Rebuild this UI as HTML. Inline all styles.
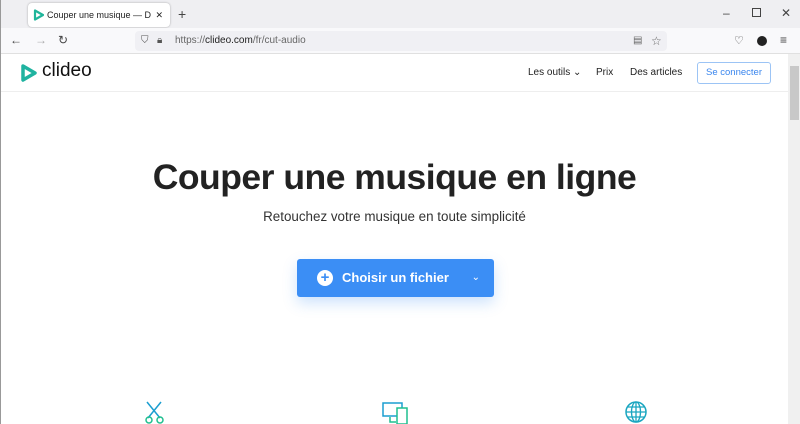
<!DOCTYPE html>
<html><head><meta charset="utf-8"><style>
*{margin:0;padding:0;box-sizing:border-box}
body{width:800px;height:424px;overflow:hidden;background:#fff;font-family:"Liberation Sans",sans-serif;position:relative;border-left:1px solid #999;border-right:1px solid #999}
.tabbar{position:absolute;left:0;top:0;width:800px;height:28px;background:#efeff2}
.tab{position:absolute;left:27px;top:3px;width:142px;height:24px;background:#fff;border-radius:4px;box-shadow:0 0 2px rgba(0,0,0,.3);font-size:9px;color:#222;line-height:24px}
.tabt{position:absolute;left:19px;top:0;width:104px;white-space:nowrap;overflow:hidden}
.toolbar{position:absolute;left:0;top:28px;width:800px;height:26px;background:#f9f9fb;border-bottom:1px solid #e0e0e0}
.url{position:absolute;left:134px;top:3px;width:532px;height:20px;background:#f0f0f4;border-radius:4px;font-size:10px;color:#666;line-height:20px;padding-left:40px}
.ic{position:absolute;font-size:12px;color:#444}
.header{position:absolute;left:0;top:54px;width:787px;height:38px;border-bottom:1px solid #eee}
.nav{position:absolute;top:13px;font-size:10px;color:#222}
.btn2{position:absolute;left:696px;top:8px;width:74px;height:22px;border:1px solid #9cc4f5;border-radius:3px;color:#3a86ee;font-size:9.5px;text-align:center;line-height:20px}
.scroll{position:absolute;left:787px;top:54px;width:13px;height:370px;background:#f0f0f0}
.thumb{position:absolute;left:789px;top:66px;width:9px;height:54px;background:#c8c8c8}
h1{position:absolute;left:0;width:787px;top:157px;text-align:center;font-size:35.5px;font-weight:bold;color:#222;letter-spacing:-0.5px}
.sub{position:absolute;left:0;width:787px;top:209px;text-align:center;font-size:13.4px;color:#333}
.main{position:absolute;left:296px;top:259px;width:197px;height:38px;background:#3b8ef5;border-radius:3px;box-shadow:0 6px 14px rgba(59,142,245,.25);color:#fff;font-size:13px;font-weight:bold;line-height:38px;padding-left:45px}
.plus{position:absolute;left:20px;top:11px;width:16px;height:16px;border-radius:50%;background:#fff;color:#3b8ef5;font-size:15px;line-height:16px;text-align:center}
</style></head><body>
<div class="tabbar">
<div class="tab"><svg style="position:absolute;left:5px;top:6px" width="11" height="12"><path d="M2 1.5 L10 6 L2 10.5 Z" fill="none" stroke="#1fb59a" stroke-width="2.2" stroke-linejoin="round"/></svg><div class="tabt">Couper une musique — Découvrir</div><span style="position:absolute;right:7px;top:0">✕</span></div>
<div class="ic" style="left:177px;top:6px;font-size:14px">+</div>
<div class="ic" style="left:722px;top:6px">–</div>
<div class="ic" style="left:751px;top:8px;width:9px;height:9px;border:1px solid #444"></div>
<div class="ic" style="left:780px;top:6px">✕</div>
</div>
<div class="toolbar">
<div class="ic" style="left:9px;top:5px">←</div>
<div class="ic" style="left:34px;top:5px;color:#aaa">→</div>
<div class="ic" style="left:57px;top:5px">↻</div>
<div class="url"><span style="position:absolute;left:6px;top:0;color:#555">⛉</span><span style="position:absolute;left:22px;top:0;color:#555">🔒︎</span>https://<b style="color:#222;font-weight:normal">clideo.com</b>/fr/cut-audio
<span style="position:absolute;left:498px;top:0">▤</span><span style="position:absolute;left:516px;top:0;font-size:12px">☆</span></div>
<div class="ic" style="left:733px;top:6px;font-size:11px">♡</div>
<div style="position:absolute;left:756px;top:8px;width:10px;height:10px;border-radius:50%;background:#222"></div>
<div class="ic" style="left:779px;top:5px">≡</div>
</div>
<div class="header">
<svg style="position:absolute;left:19px;top:9px" width="18" height="20"><path d="M3 3 L15 10 L3 17 Z" fill="none" stroke="#1fb3a0" stroke-width="3.5" stroke-linejoin="round"/></svg>
<div style="position:absolute;left:41px;top:6px;font-size:19px;color:#111">clideo</div>
<div class="nav" style="left:527px">Les outils ⌄</div>
<div class="nav" style="left:595px">Prix</div>
<div class="nav" style="left:629px">Des articles</div>
<div class="btn2">Se connecter</div>
</div>
<div class="scroll"></div><div class="thumb"></div>
<h1>Couper une musique en ligne</h1>
<div class="sub">Retouchez votre musique en toute simplicité</div>
<div class="main"><div class="plus">+</div>Choisir un fichier<span style="position:absolute;right:14px;top:0;font-size:10px;font-weight:normal">⌄</span></div>
<svg style="position:absolute;left:144px;top:401px" width="20" height="23"><path d="M2 1 L15 17 M16 1 L3 17" stroke="#1b9ed0" stroke-width="1.5"/><circle cx="4" cy="19" r="3" fill="none" stroke="#1fbf8f" stroke-width="1.5"/><circle cx="15" cy="19" r="3" fill="none" stroke="#1fbf8f" stroke-width="1.5"/></svg>
<svg style="position:absolute;left:381px;top:402px" width="27" height="22"><rect x="1" y="1" width="19" height="13" fill="none" stroke="#1b9ed0" stroke-width="1.5"/><rect x="15" y="6" width="10" height="16" fill="#fff" stroke="#1fbf8f" stroke-width="1.5"/><path d="M8 15 V20 H14" stroke="#1fbf8f" stroke-width="1.5" fill="none"/></svg>
<svg style="position:absolute;left:623px;top:400px" width="24" height="24"><circle cx="12" cy="12" r="10" fill="none" stroke="#1aa6c0" stroke-width="1.5"/><ellipse cx="12" cy="12" rx="4.5" ry="10" fill="none" stroke="#1aa6c0" stroke-width="1.3"/><path d="M2 12 H22 M4 7 H20 M4 17 H20 M12 2 V22" stroke="#1aa6c0" stroke-width="1.3"/></svg>
</body></html>
